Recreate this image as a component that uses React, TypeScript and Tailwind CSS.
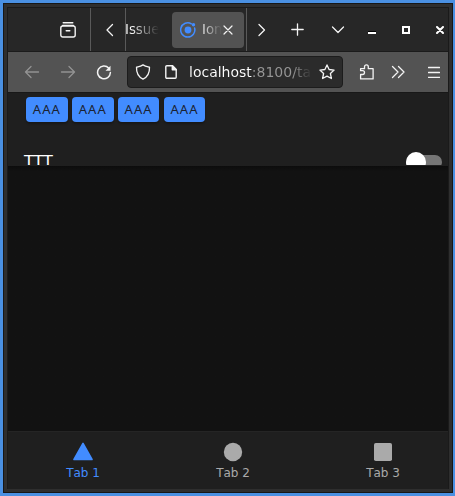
import type { ReactNode } from "react";

type GlyphProps = { children: ReactNode; className?: string; w?: number; h?: number; sw?: number };

function Glyph({ children, className = "", w = 16, h = 16, sw = 1.3 }: GlyphProps) {
  return (
    <svg
      width={w}
      height={h}
      viewBox={`0 0 ${w} ${h}`}
      fill="none"
      stroke="currentColor"
      strokeWidth={sw}
      strokeLinecap="round"
      strokeLinejoin="round"
      className={`block shrink-0 ${className}`}
    >
      {children}
    </svg>
  );
}

function TabStrip() {
  return (
    <div className="flex h-[44px] shrink-0 items-center border-b border-[#1b1b1b] bg-[#272727] text-[#f4f4f4]">
      <div className="flex h-full w-[83px] shrink-0 items-center border-r border-[#5a5a5a] pl-[52px]">
        <Glyph sw={1.4}>
          <path d="M3.2.8h9.6M2.6 3.4h10.8" />
          <rect x="0.8" y="4" width="14.4" height="11" rx="2" />
          <path d="M6.2 8.7h3.6" />
        </Glyph>
      </div>
      <div className="flex h-full w-[35px] shrink-0 items-center border-r border-[#5a5a5a] pl-[15px]">
        <Glyph w={8} h={14}>
          <path d="M6.5 1.5 1 7l5.5 5.5" />
        </Glyph>
      </div>
      <div className="w-[46px] shrink-0 overflow-hidden">
        <span className="-ml-px block w-[34px] overflow-hidden whitespace-nowrap bg-linear-to-r from-white from-15% to-transparent to-100% bg-clip-text text-[13.33px] leading-[18px] text-transparent">
          Issue
        </span>
      </div>
      <div className="flex h-9 w-[72px] shrink-0 items-center rounded bg-[#535353] pl-2">
        <Glyph className="text-[#428cff]" sw={1.5}>
          <path d="M14.6 6a7.1 7.1 0 1 1-3.2-4.2" />
          <circle cx="8" cy="8" r="3.4" fill="currentColor" stroke="none" />
          <circle cx="13.5" cy="2.8" r="1.7" fill="currentColor" stroke="none" />
        </Glyph>
        <span className="ml-[6px] block w-[20px] shrink-0 overflow-hidden whitespace-nowrap bg-linear-to-r from-[#eeeeee] to-[#535353] bg-clip-text text-[13.33px] leading-[18px] text-transparent">
          Ion
        </span>
        <Glyph w={10} h={10} className="ml-[1px]" sw={1.2}>
          <path d="m1 1 8 8M9 1 1 9" />
        </Glyph>
      </div>
      <div className="ml-[2px] flex h-full w-[35px] shrink-0 items-center border-l border-[#5a5a5a] pl-[11px]">
        <Glyph w={8} h={14}>
          <path d="m1 1.500 5.500 5.500L1 12.500" />
        </Glyph>
      </div>
      <Glyph w={13} h={13} className="ml-[10px]">
        <path d="M6.500 .8v11.400M.8 6.500h11.400" />
      </Glyph>
      <Glyph w={14} h={8} className="ml-[27px]">
        <path d="M1.500 1 7 6.500 12.500 1" />
      </Glyph>
      <span className="ml-[23px] mt-[5px] block h-[3px] w-2 shrink-0 border-t border-black bg-white" />
      <span className="ml-[26px] block h-2 w-2 shrink-0 border-2 border-white" />
      <Glyph w={8} h={8} className="ml-[26px] text-white" sw={2}>
        <path d="m1 1 6 6M7 1 1 7" />
      </Glyph>
    </div>
  );
}

function Toolbar() {
  return (
    <div className="flex h-10 shrink-0 items-center bg-[#535353] text-[#f4f4f4]">
      <Glyph className="ml-4 text-[#939393]">
        <path d="M14.500 8h-13M7 2.500 1.500 8 7 13.500" />
      </Glyph>
      <Glyph className="ml-5 text-[#939393]">
        <path d="M1.500 8h13M9 2.500 14.500 8 9 13.500" />
      </Glyph>
      <Glyph className="ml-5" sw={1.5}>
        <path d="M12.800 4.200A6.400 6.400 0 1 0 14.400 8.600" />
        <path d="M14.500 1.800v5H9.500z" fill="currentColor" stroke="none" />
      </Glyph>
      <div className="ml-[15px] flex h-8 w-[216px] shrink-0 items-center rounded border border-[#1c1c1c] bg-[#2b2b2b] pl-[7px]">
        <Glyph>
          <path d="M8 .9C6 2.300 3.800 2.700 1.500 3.200c-.2 5.700 1.300 9.400 6.500 11.900 5.200-2.500 6.700-6.200 6.500-11.900C12.200 2.700 10 2.300 8 .9z" />
        </Glyph>
        <Glyph w={12} h={14} className="ml-[14px]" sw={1.4}>
          <path d="M1.800.8h5.700L11.200 4.500v7.700a1 1 0 0 1-1 1H1.800a1 1 0 0 1-1-1V1.800a1 1 0 0 1 1-1z" />
          <path d="M7.300.8v4h3.900z" fill="currentColor" />
        </Glyph>
        <span className="ml-[12px] block w-[123px] shrink-0 overflow-hidden whitespace-nowrap bg-clip-text text-[14px] leading-5 text-transparent [background-image:linear-gradient(to_right,white_51%,#969696_52%,#969696_84%,#2b2b2b_100%)]">
          localhost:8100/ta
        </span>
        <Glyph className="ml-[7px]">
          <path d="m8 .9 2.100 4.600 5 .6-3.700 3.400 1 5L8 12.100l-4.400 2.400 1-5L.9 6.100l5-.6z" />
        </Glyph>
      </div>
      <Glyph className="ml-4">
        <path d="M1.600 14.900V10.500h2a1.900 1.900 0 0 0 0-3.800h-2V4.700H5.500V2.800a1.900 1.900 0 0 1 3.800 0v1.900h4.800v10.200z" />
      </Glyph>
      <Glyph className="ml-4">
        <path d="m1.500 2.500 5.500 5.500-5.500 5.500M7.500 2.500l5.500 5.500-5.500 5.500" />
      </Glyph>
      <Glyph w={12} h={12} className="ml-[21px]">
        <path d="M.5 1.500h11M.5 6.500h11M.5 11.300h11" />
      </Glyph>
    </div>
  );
}

function PageHeader() {
  return (
    <div className="h-[74px] shrink-0 overflow-hidden border-y border-b-[#1f1f1f] border-t-[#181818] bg-[#1f1f1f]">
      <div className="flex gap-[4.2px] pl-[18px] pt-1">
        {[0, 1, 2, 3].map((i) => (
          <button
            key={i}
            className="h-[25px] w-[41.700px] rounded bg-[#428cff] font-['Noto_Sans',sans-serif] text-[13px] leading-[25px] tracking-[0.080em] text-[#1b2230] shadow-[0_2px_2px_rgba(0,0,0,0.250)]"
          >
            AAA
          </button>
        ))}
      </div>
      <div className="mt-[29px] flex items-start justify-between pl-4 pr-[6px]">
        <span className="text-[16px] leading-[22px] text-white">TTT</span>
        <div className="mt-[4px] h-[14px] w-9 rounded-full bg-[#767676]">
          <span className="-mt-[3px] block h-5 w-5 rounded-full bg-white" />
        </div>
      </div>
    </div>
  );
}

function BottomTabs() {
  const tabs = [
    {
      label: "Tab 1",
      tone: "text-[#428cff]",
      shape: <path d="M11.300 1.900a.8.8 0 0 1 1.400 0l9 16.200a.8.8 0 0 1-.7 1.200H3a.8.8 0 0 1-.7-1.200z" />,
    },
    { label: "Tab 2", tone: "text-[#aaaaaa]", shape: <circle cx="12" cy="11" r="9.200" /> },
    { label: "Tab 3", tone: "text-[#aaaaaa]", shape: <rect x="3" y="2" width="18" height="18" rx="1.800" /> },
  ];
  return (
    <div className="flex h-[58px] shrink-0 border-t border-[#252525] bg-[#1f1f1f]">
      {tabs.map((tab) => (
        <div key={tab.label} className={`flex w-[150px] shrink-0 flex-col items-center pt-[9px] ${tab.tone}`}>
          <svg width="24" height="22" viewBox="0 0 24 22" fill="currentColor">
            {tab.shape}
          </svg>
          <span className="mt-[3px] text-[12px] leading-[14px] [font-kerning:none]">{tab.label}</span>
        </div>
      ))}
    </div>
  );
}

export default function App() {
  return (
    <div className="h-[496px] w-[455px] overflow-hidden bg-[#4a90e2] pb-[3px] pl-[3px] pr-[2px] pt-[3px] font-['DejaVu_Sans',sans-serif]">
      <div className="h-full border border-[#171717] bg-[#2e2e2e] px-[3px] py-[3px]">
        <div className="flex h-full flex-col overflow-hidden border-x border-t border-[#1a1a1a] bg-[#121212]">
          <TabStrip />
          <Toolbar />
          <PageHeader />
          <div className="flex-1 bg-linear-to-b from-[#0c0c0c] to-[#121212] to-2%" />
          <BottomTabs />
        </div>
      </div>
    </div>
  );
}
